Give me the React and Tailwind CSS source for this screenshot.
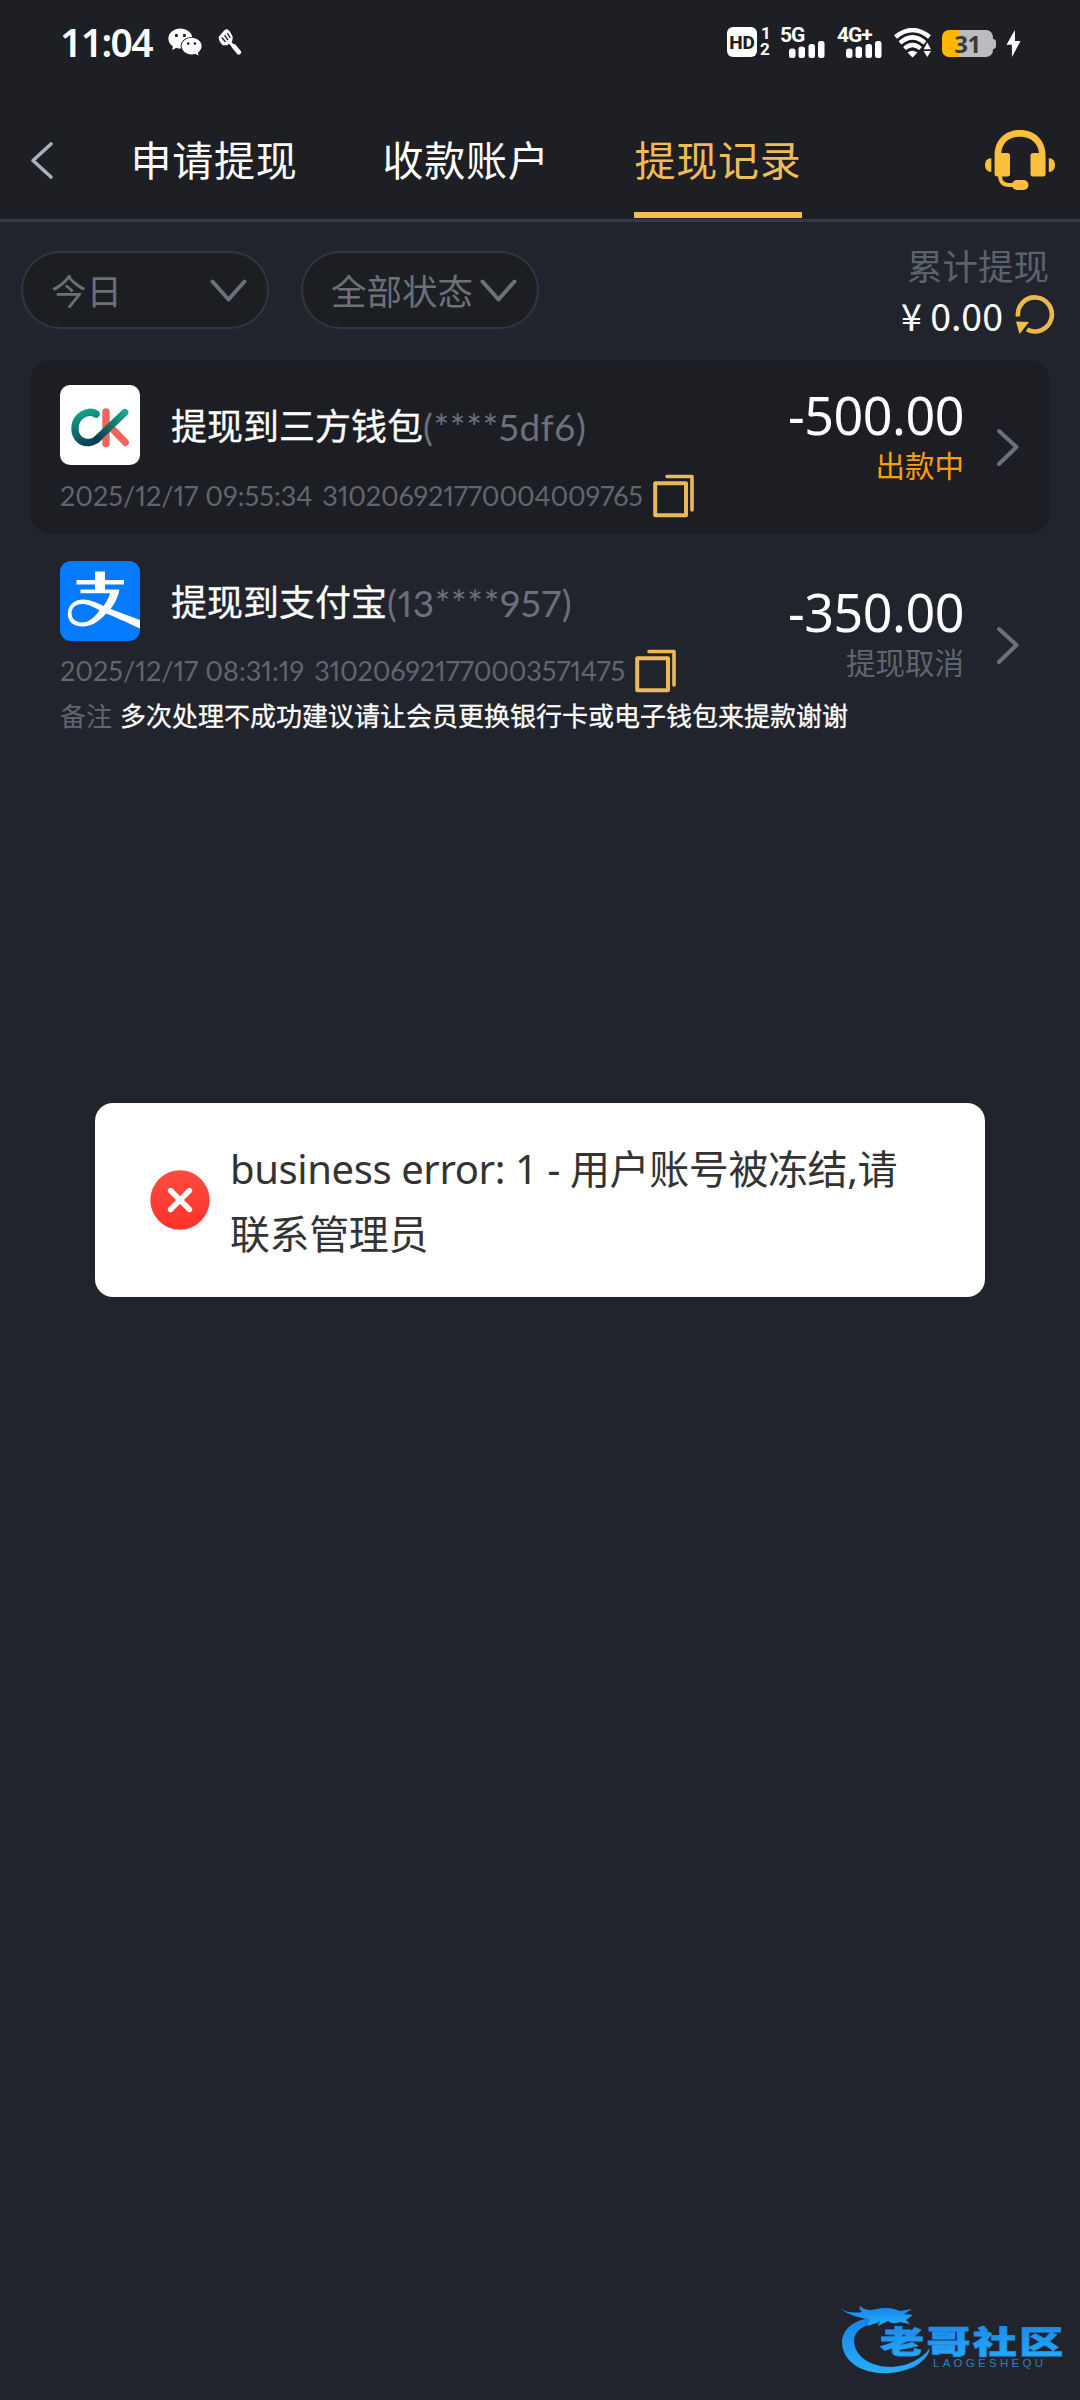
import React, { useState } from 'react';
import { AiFillWechat } from 'react-icons/ai';

const tabs = ['申请提现', '收款账户', '提现记录'];

const records = [
  {
    id: '310206921770004009765',
    type: 'ck',
    title: '提现到三方钱包',
    account: '(****5df6)',
    time: '2025/12/17 09:55:34',
    amount: '-500.00',
    status: '出款中',
    pending: true,
  },
  {
    id: '310206921770003571475',
    type: 'alipay',
    title: '提现到支付宝',
    account: '(13****957)',
    time: '2025/12/17 08:31:19',
    amount: '-350.00',
    status: '提现取消',
    pending: false,
    note: '多次处理不成功建议请让会员更换银行卡或电子钱包来提款谢谢',
  },
];

const Chevron = ({ d, className, width, height, stroke = 4 }) => (
  <svg className={className} width={width} height={height} viewBox={`0 0 ${width} ${height}`} fill="none">
    <path d={d} stroke="currentColor" strokeWidth={stroke} strokeLinecap="round" strokeLinejoin="round" />
  </svg>
);

const SignalBars = () => (
  <svg width="36" height="17" viewBox="0 0 36 17" fill="#fff">
    <rect x="0" y="7.5" width="6.5" height="9.5" rx="2.5" />
    <rect x="9.5" y="5.5" width="6.5" height="11.5" rx="2.5" />
    <rect x="19.5" y="3" width="6.5" height="14" rx="2.5" />
    <rect x="29" y="0" width="6.5" height="17" rx="2.5" />
  </svg>
);

const StatusBar = () => (
  <div className="flex h-[84px] items-start justify-between pt-[27px] pr-[59px] pl-[60px] text-white">
    <div className="flex h-[30px] items-center">
      <span className="w-[110px] font-['Noto_Sans'] text-[39px] leading-[30px] font-semibold tracking-[-1.6px]">
        11:04
      </span>
      <AiFillWechat className="-ml-[4px] h-[38px] w-[38px]" />
      {/* Spatula */}
      <svg className="ml-[14px]" width="24" height="26" viewBox="0 0 24 26" fill="none">
        <path d="M1.5 8 Q1 11 5 15.5 L9 15.5 L13.5 12 L14 8 Q11.5 3 10 1.5 Q8.5 0.5 6.5 2.2 Z" fill="#fff" stroke="#fff" strokeWidth="1.5" strokeLinejoin="round" />
        <path d="M3.8 8.5 L7.5 13 M6.6 6.2 L10 11 M9.4 4 L12.2 8.8" stroke="#1d1f24" strokeWidth="1.3" />
        <path d="M11.5 13 L15.5 17.5" stroke="#fff" strokeWidth="3" />
        <path d="M16 17.5 L20.8 23.2" stroke="#fff" strokeWidth="4.6" strokeLinecap="round" />
      </svg>
    </div>

    <div className="flex h-[31px] items-start">
      <div className="flex h-[30px] w-[30px] items-center justify-center rounded-[6px] bg-white font-['Roboto'] text-[19px] leading-none font-extrabold text-[#1d1f24]">
        HD
      </div>
      <div className="ml-[3px] flex w-[20px] flex-col font-['Roboto'] text-[17px] leading-[17px] font-bold">
        <span className="-mt-[2px] pl-[1px] leading-[16px]">1</span>
        <span>2</span>
      </div>
      <div className="w-[57px]">
        <div className="h-[14px] font-['Roboto'] text-[21px] leading-[16px] font-bold tracking-[-1px]">5G</div>
        <div className="pl-[9px]">
          <SignalBars />
        </div>
      </div>
      <div className="w-[57px]">
        <div className="h-[14px] font-['Roboto'] text-[21px] leading-[16px] font-bold tracking-[-1px]">4G+</div>
        <div className="pl-[9px]">
          <SignalBars />
        </div>
      </div>
      <svg className="mt-px" width="37" height="30" viewBox="0 0 37 30" fill="none">
        <path d="M1.5 9 Q18.5 -5 35.5 9" stroke="#fff" strokeWidth="4.4" />
        <path d="M6 14.8 Q18.5 4 31 14.8" stroke="#fff" strokeWidth="4.4" />
        <path d="M10.5 20.5 Q18.5 13.5 26.5 20.5" stroke="#fff" strokeWidth="4.2" />
        <path d="M13.5 24.5 Q18.5 21 23.5 24.5 L18.5 29.5 Z" fill="#fff" />
        <path d="M33.3 14.5 L37 21.2 H29.6 Z M33.3 29 L37 23 H29.6 Z" fill="#fff" />
      </svg>
      <div className="mt-[3px] ml-[11px] flex items-center">
        <div className="flex h-[27px] w-[51px] items-center justify-center rounded-[7px] bg-gradient-to-r from-[#ffb800] from-33% to-[#bcbcbe] to-33% font-['Noto_Sans'] text-[24px] leading-none font-bold tracking-[-0.5px] text-[#3c3a36]">
          31
        </div>
        <div className="h-[10px] w-[3px] rounded-r-[3px] bg-[#bcbcbe]" />
      </div>
      <svg className="mt-[3px] ml-[10px]" width="15" height="27" viewBox="0 0 15 27" fill="#fff">
        <path d="M8.8 0 L0.5 14.8 H5.8 L6 27 L14.5 11 H9 Z" />
      </svg>
    </div>
  </div>
);

const Headset = () => (
  <svg width="70" height="60" viewBox="0 0 70 60" fill="#f9bf3d">
    <path d="M9.6 44 V25.5 C9.6 10 20 0 35 0 S60.6 10 60.6 25.5 V44 Q60.6 46.5 58 46.5 H48 Q45.5 46.5 45.5 44 V25.5 Q45.5 23 48 23 H54 C53 13 46 6.7 35 6.7 S17 13 16.3 23 H22.5 Q25 23 25 25.5 V44 Q25 46.5 22.5 46.5 H12.5 Q9.6 46.5 9.6 44 Z" />
    <path d="M6.3 28 V42 Q0 41.5 0 35 T6.3 28 Z M63.8 28 V42 Q70 41.5 70 35 T63.8 28 Z" />
    <path d="M15 45 Q15 55 24 55 H31" fill="none" stroke="#f9bf3d" strokeWidth="3.8" />
    <rect x="27" y="50" width="16.5" height="10" rx="5" />
  </svg>
);

const CopyIcon = () => (
  <svg className="shrink-0" width="42" height="44" viewBox="0 0 42 44" fill="none" stroke="#e9ba5b" strokeLinejoin="round">
    <rect x="2.2" y="9.2" width="30.8" height="32" strokeWidth="4" />
    <path d="M14 2.5 H39 V36" strokeWidth="3.6" strokeLinecap="round" />
  </svg>
);

const CkLogo = () => (
  <svg className="rounded-[10px] bg-white" width="80" height="80" viewBox="0 0 80 80" fill="none" strokeLinecap="round">
    <defs>
      <linearGradient id="ckCurve" x1="22" y1="26" x2="34" y2="60" gradientUnits="userSpaceOnUse">
        <stop offset="0" stopColor="#12a388" />
        <stop offset="1" stopColor="#0a3b52" />
      </linearGradient>
      <linearGradient id="ckArm" x1="36" y1="52" x2="66" y2="26" gradientUnits="userSpaceOnUse">
        <stop offset="0" stopColor="#0a3b52" />
        <stop offset="1" stopColor="#18ad8d" />
      </linearGradient>
    </defs>
    <path d="M46 27 V58.5" stroke="#f0645b" strokeWidth="7.4" />
    <path d="M52 43.5 L65.5 57.5" stroke="#f0645b" strokeWidth="7" />
    <path d="M36 29 C32 26.5 27 26.5 22 30 C13 36 13 49 20 55 C26 59.5 34 57.5 38.5 53" stroke="url(#ckCurve)" strokeWidth="7.4" />
    <path d="M37 54 L64.8 27.5" stroke="url(#ckArm)" strokeWidth="7.2" />
  </svg>
);

const AlipayLogo = () => (
  <svg className="rounded-[11px] bg-[#067bff]" width="80" height="80" viewBox="0 0 80 80" fill="none">
    <path d="M35 10.5 H45 V19 H64 V23.5 H45 V28.5 H59.5 C58 37 54 43.5 50.5 48 L80 59 V67.5 C65 60.5 55 56 46 52.5 C38 62 29 66 21.5 65.5 C12 65 7.8 59.5 7.8 52.5 C7.8 44 15 38 24 38.5 C31 39 37.5 42 43.5 45 C46.5 41 48.8 37 50 32.3 H20.5 V28.5 H35 V23.5 H16.5 V19 H35 Z" fill="#fff" />
    <path d="M39.5 49.5 C33 45.5 27.5 43 22 43 C15 43 11.5 47.5 11.5 52 C11.5 58 16 61.5 22 61.5 C28.5 61.5 34 57 39.5 49.5 Z" fill="#067bff" />
  </svg>
);

const FilterPill = ({ label, className }) => (
  <button
    type="button"
    className={`flex h-[78px] items-center justify-between rounded-full border-2 border-[#30363f] bg-[#1d1e22] pr-[20px] pl-[28px] text-[35.5px] text-[#6b707a] ${className}`}
  >
    <span className="pt-px leading-[50px]">{label}</span>
    <Chevron d="M2.5 2.5 L18.5 20.5 L34.5 2.5" width={37} height={23} stroke={4} />
  </button>
);

const RecordRow = ({ record }) => (
  <div className={`mx-[30px] flex rounded-[22px] px-[30px] ${record.pending ? 'h-[174px] bg-[#1d1e23] pt-[25px]' : 'h-[210px] pt-[27px]'}`}>
    <div className="flex w-[660px] flex-col">
      <div className="flex h-[80px] items-center">
        {record.type === 'ck' ? <CkLogo /> : <AlipayLogo />}
        <div className="ml-[31px] flex items-center pt-[3px] text-[36px] leading-[50px] whitespace-nowrap text-white">
          <span className="[-webkit-text-stroke:0.3px]">{record.title}</span>
          <span className="font-['Lato'] text-[37px] leading-[48px] tracking-[0.6px] text-[#6b707a] proportional-nums">
            {record.account}
          </span>
        </div>
      </div>
      <div className={`flex h-[44px] items-center ${record.pending ? 'mt-[9px]' : 'mt-[8px]'}`}>
        <span className="mr-[10px] font-['Lato'] text-[27px] whitespace-nowrap text-[#60656f] proportional-nums">
          {record.time}
        </span>
        <span className="mr-[10px] font-['Lato'] text-[27px] tracking-[-0.2px] whitespace-nowrap text-[#60656f] proportional-nums">
          {record.id}
        </span>
        <CopyIcon />
      </div>
      {record.note && (
        <div className="mt-[4px] flex text-[26px] leading-[38px] whitespace-nowrap">
          <span className="mr-[8px] text-[#60656f]">备注</span>
          <span className="text-white [-webkit-text-stroke:0.3px]">{record.note}</span>
        </div>
      )}
    </div>
    <div className={`ml-auto flex shrink-0 flex-col items-end ${record.pending ? 'pt-[5px]' : 'pt-[26px]'}`}>
      <span className="h-[50px] font-['Noto_Sans'] text-[52px] leading-[50px] tracking-[-0.5px] text-white">{record.amount}</span>
      <span className={`mt-[8px] text-[29.5px] leading-[36px] ${record.pending ? 'text-[#fe9d0a]' : 'text-[#60656f]'}`}>
        {record.status}
      </span>
    </div>
    <Chevron
      className={`ml-[32px] shrink-0 text-[#6b707a] ${record.pending ? 'mt-[43px]' : 'mt-[65px]'}`}
      d="M3 3 L20.5 19 L3 36"
      width={24}
      height={39}
    />
  </div>
);

const Toast = ({ message }) => (
  <div className="absolute top-[1103px] left-[95px] flex h-[194px] w-[890px] items-center rounded-[18px] bg-white pl-[55px]">
    <svg className="shrink-0" width="60" height="60" viewBox="0 0 60 60">
      <defs>
        <linearGradient id="toastRed" x1="0" y1="0" x2="0" y2="1">
          <stop offset="0" stopColor="#ff4b42" />
          <stop offset="1" stopColor="#fb3328" />
        </linearGradient>
      </defs>
      <circle cx="30" cy="30" r="29.7" fill="url(#toastRed)" />
      <path d="M20.5 20.5 L39.5 39.5 M39.5 20.5 L20.5 39.5" stroke="#fff" strokeWidth="5.4" strokeLinecap="round" />
    </svg>
    <p className="ml-[20px] w-[680px] pt-[2px] text-[40px] leading-[65px] tracking-[-0.4px] text-[#333333]">{message}</p>
  </div>
);

const Watermark = () => (
  <svg className="absolute right-[14px] bottom-[22px]" width="226" height="74" viewBox="0 0 226 74">
    <defs>
      <linearGradient id="wmBlue" x1="0" y1="0" x2="0" y2="1">
        <stop offset="0" stopColor="#1583e8" />
        <stop offset="1" stopColor="#27aef8" />
      </linearGradient>
    </defs>
    <g fill="url(#wmBlue)">
      <path d="M34 13 C12 16 2 26 2 39 C3 60 26 71 50 69 C72 67 88 57 90 44 C82 55 68 62 52 63 C30 63 14 52 14 36 C15 26 24 20 40 19 Z" />
      <path d="M0 5 Q10 10 22 8 Q18 4 20 2 Q27 8 36 5 Q50 2 60 7 L72 5 L64 10 L73 11 L66 16 L70 20 L60 18 Q52 21 48 17 L38 22 L40 17 L28 22 L30 15 Q14 14 0 5 Z" />
    </g>
    <text
      x="0"
      y="0"
      transform="translate(40 49) scale(1.42 1)"
      textLength="129"
      fill="url(#wmBlue)"
      stroke="#2094ef"
      strokeWidth="0.8"
      className="font-['Noto_Sans_CJK_SC'] text-[31px] font-black"
    >
      老哥社区
    </text>
    <text x="93" y="63" textLength="110" fill="#2f7fbb" className="font-['Liberation_Sans'] text-[11.5px]">
      LAOGESHEQU
    </text>
  </svg>
);

const App = () => {
  const [activeTab, setActiveTab] = useState('提现记录');

  return (
    <div className="relative h-[2400px] w-[1080px] overflow-hidden bg-[#21242d] font-['Noto_Sans','Noto_Sans_CJK_SC',sans-serif]">
      <header className="h-[222px] border-b-3 border-[#343943] bg-[#1d1f24]">
        <StatusBar />
        <div className="flex h-[134px] pl-[30px]">
          <Chevron
            className="mt-[57px] text-[#a9b1bd]"
            d="M21 3 L3 19.5 L21 36"
            width={24}
            height={39}
            stroke={3.6}
          />
          <nav className="ml-[76px] flex gap-[84px]">
            {tabs.map((tab) => (
              <button
                key={tab}
                type="button"
                onClick={() => setActiveTab(tab)}
                className={`h-[134px] w-[168px] border-b-6 pt-[46px] text-[41px] leading-[60px] tracking-[0.7px] whitespace-nowrap ${
                  activeTab === tab ? 'border-[#f5bd51] text-[#f0bc57]' : 'border-transparent text-white'
                }`}
              >
                <span className="block h-[82px]">{tab}</span>
              </button>
            ))}
          </nav>
          <div className="mt-[46px] ml-[183px]">
            <Headset />
          </div>
        </div>
      </header>

      <div className="flex h-[138px] pt-[29px] pr-[25px] pl-[21px]">
        <FilterPill label="今日" className="w-[248px]" />
        <FilterPill label="全部状态" className="ml-[32px] w-[238px]" />
        <div className="ml-auto flex flex-col items-end">
          <span className="mt-[-10px] mr-[6px] text-[35.5px] leading-[50px] text-[#5b626c]">累计提现</span>
          <div className="flex h-[48px] items-center text-white">
            <span className="mr-[12px] font-['Noto_Sans_CJK_SC'] text-[37.5px] leading-[48px]">¥ 0.00</span>
            <svg width="40" height="40" viewBox="0 0 40 40" fill="none">
              <path d="M3 21.5 A17 17 0 1 1 12 34.5" stroke="#e9b94c" strokeWidth="4.6" />
              <path d="M1 26.5 L14 27 L4.5 39 Z" fill="#f2bd48" />
            </svg>
          </div>
        </div>
      </div>

      {records.map((record) => (
        <RecordRow key={record.id} record={record} />
      ))}

      <Toast message="business error: 1 - 用户账号被冻结,请联系管理员" />
      <Watermark />
    </div>
  );
};

export default App;
